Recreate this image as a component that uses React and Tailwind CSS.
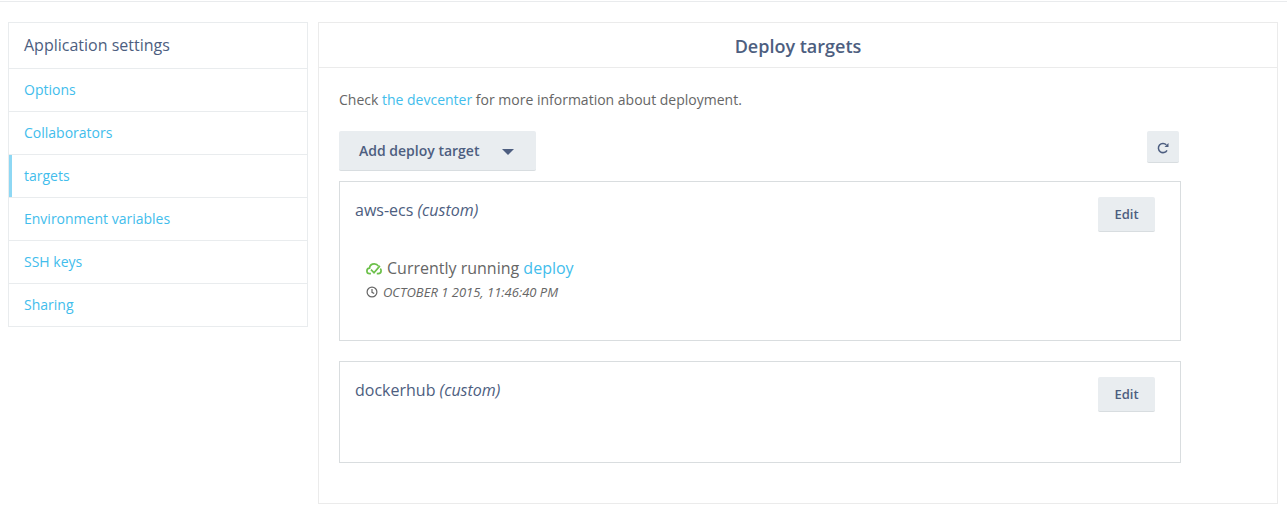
const navItems = ['Options', 'Collaborators', 'targets', 'Environment variables', 'SSH keys', 'Sharing'];

function CloudCheck() {
  return (
    <svg className="mt-0.5 h-[14px] w-4 shrink-0" viewBox="0 0 16 14" fill="none" stroke="#6cc04a" strokeWidth="1.7">
      <path d="M4.9 11.7 H3.8 C2 11.7 0.9 10.5 0.9 9 C0.9 7.5 2 6.3 3.5 6.2 C3.8 3.5 5.8 1.9 8.3 1.9 C10 1.9 11.6 2.8 12.4 4.1" />
      <path d="M5 7.6 L8 10.8 L13.9 3.9" />
      <path d="M14.3 6.6 C14.9 7.2 15.1 8 15.1 8.8 C15.1 10.5 13.9 11.7 12.2 11.7 H10.8" />
    </svg>
  );
}

function Clock() {
  return (
    <svg className="h-3 w-3 shrink-0" viewBox="0 0 12 12" fill="none" stroke="#666" strokeWidth="1.2">
      <circle cx="6" cy="6" r="4.9" />
      <path d="M6 2.9 V6.3 L8.2 7.6" />
    </svg>
  );
}

function Refresh() {
  return (
    <svg className="h-3 w-3" viewBox="0 0 12 12" fill="none" stroke="#4d5e80" strokeWidth="1.5">
      <path d="M10 8.3 A4.6 4.6 0 1 1 9.3 2.8" />
      <path d="M11.5 1 V5 H7.5 Z" fill="#4d5e80" stroke="none" />
    </svg>
  );
}

function Target({ name, className, children }) {
  return (
    <section className={`flex w-[842px] items-start justify-between border border-[#d9dddf] pt-[15px] pr-[25px] pl-[15px] ${className}`}>
      <div>
        <h2 className="text-base leading-[27px] text-[#4d5e80]">
          {name} <em>(custom)</em>
        </h2>
        {children}
      </div>
      <button className="h-[35px] w-[57px] rounded-[2px] border-b border-[#d8dde0] bg-[#e9edf0] pt-0.5 text-[13px] font-semibold text-[#4d5e80]">
        Edit
      </button>
    </section>
  );
}

export default function App() {
  return (
    <div className="h-[513px] overflow-hidden bg-white pt-px font-['Open_Sans',sans-serif] text-[14px] text-[#666]">
      <div className="h-px bg-[#e9ebed]" />
      <div className="flex items-start gap-2.5 pt-5 pl-2">
        <nav className="w-[300px] border border-[#e9ecee]">
          <h2 className="h-[45px] pl-[15px] text-base leading-[44px] text-[#4d5e80]">Application settings</h2>
          {navItems.map((item) => (
            <a
              key={item}
              className={`block h-[43px] border-t border-[#e9ecee] leading-[42px] text-[#42bdec] ${
                item === 'targets' ? 'relative pl-[15px] before:absolute before:inset-y-0 before:left-0 before:w-[3px] before:bg-[#8ed8f4]' : 'pl-[15px]'
              }`}
            >
              {item}
            </a>
          ))}
        </nav>
        <main className="h-[482px] w-[960px] border border-[#ebebeb]">
          <h1 className="h-[45px] border-b border-[#ebebeb] text-center text-lg leading-[46px] font-semibold text-[#4d5e80]">
            Deploy targets
          </h1>
          <div className="pl-5">
            <p className="pt-[22px] leading-5">
              Check <a className="text-[#42bdec]">the devcenter</a> for more information about deployment.
            </p>
            <div className="flex w-[840px] items-start justify-between pt-[21px]">
              <button className="flex h-10 w-[197px] items-center rounded-[2px] border-b border-[#d8dde0] bg-[#e9edf0] pl-5 font-semibold text-[#4d5e80]">
                Add deploy target
                <svg className="mt-0.5 ml-[23px] h-1.5 w-3" viewBox="0 0 12 6" fill="#4d5e80">
                  <path d="M0 0 H12 L6 6 Z" />
                </svg>
              </button>
              <button className="grid h-8 w-8 place-items-center rounded-[2px] border-b border-[#d8dde0] bg-[#e9edf0] pt-0.5">
                <Refresh />
              </button>
            </div>
            <Target name="aws-ecs" className="mt-2.5 h-40">
              <div className="pt-[32px] pl-[11px]">
                <div className="flex items-center gap-[5px] text-base leading-6">
                  <CloudCheck />
                  <span>
                    Currently running <a className="text-[#42bdec]">deploy</a>
                  </span>
                </div>
                <div className="flex items-center gap-[5px] text-[13px] leading-6 italic">
                  <Clock />
                  <span>OCTOBER 1 2015, 11:46:40 PM</span>
                </div>
              </div>
            </Target>
            <Target name="dockerhub" className="mt-5 h-[102px]" />
          </div>
        </main>
      </div>
    </div>
  );
}
